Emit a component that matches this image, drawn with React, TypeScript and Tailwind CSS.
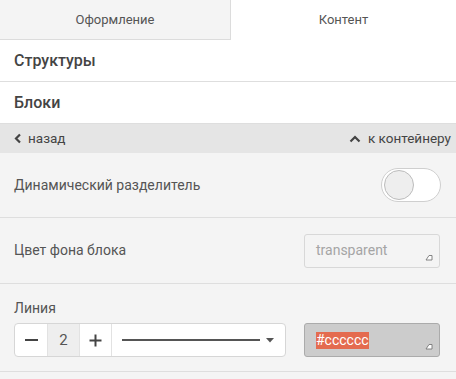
import React from "react";

const font = { fontFamily: "Roboto, 'Noto Sans', sans-serif" };

export default function App() {
  return (
    <div className="w-[456px] h-[379px] overflow-hidden bg-[#f4f4f4] text-[#555]" style={font}>
      {/* Tabs */}
      <div className="flex h-[40px] bg-white">
        <div className="w-[231px] bg-[#f4f4f4] border-r border-b border-[#dcdcdc] flex items-center justify-center text-[13px] text-[#555]">
          Оформление
        </div>
        <div className="flex-1 flex items-center justify-center text-[13px] text-[#555]">Контент</div>
      </div>
      <div className="h-[42px] bg-white border-b border-[#dedede] flex items-center px-[14px] text-[16px] font-medium text-[#444]">
        Структуры
      </div>
      <div className="h-[42px] bg-white border-b border-[#dedede] flex items-center px-[14px] text-[16px] font-medium text-[#444]">
        Блоки
      </div>
      {/* nav bar */}
      <div className="h-[29px] bg-[#e5e5e5] flex items-center justify-between pl-[14px] pr-[5px] text-[13.5px] text-[#444]">
        <div className="flex items-center gap-[6px]">
          <svg width="8" height="11" viewBox="0 0 8 11">
            <path d="M6 1.5 L2 5.5 L6 9.5" fill="none" stroke="#444" strokeWidth="2.2" />
          </svg>
          <span>назад</span>
        </div>
        <div className="flex items-center gap-[7px]">
          <svg width="12" height="8" viewBox="0 0 12 8">
            <path d="M1.5 6.5 L6 2 L10.5 6.5" fill="none" stroke="#444" strokeWidth="2.2" />
          </svg>
          <span>к контейнеру</span>
        </div>
      </div>
      {/* Dynamic separator */}
      <div className="h-[65px] border-b border-[#dedede] flex items-center justify-between pl-[14px] pr-[15px]">
        <span className="text-[14px] text-[#555]">Динамический разделитель</span>
        <div className="w-[60px] h-[34px] rounded-full border border-[#cfcfcf] bg-white flex items-center px-[2px]">
          <div className="w-[30px] h-[30px] rounded-full border border-[#bcbcbc] bg-[#eeeeee]" />
        </div>
      </div>
      {/* Background color */}
      <div className="h-[66px] border-b border-[#dedede] flex items-center justify-between pl-[14px] pr-[16px]">
        <span className="text-[14px] text-[#555]">Цвет фона блока</span>
        <div className="relative w-[136px] h-[34px] rounded-[3px] border border-[#d8d8d8] flex items-center pl-[11px] text-[14px] text-[#a5a5a5]">
          transparent
          <svg className="absolute right-[6px] bottom-[6px]" width="8" height="7" viewBox="0 0 8 7">
            <path d="M1 6 L4 1.5 L7 1.5 L7 6 Z" fill="white" stroke="#777" strokeWidth="0.9" />
          </svg>
        </div>
      </div>
      {/* Line */}
      <div className="h-[88px] border-b border-[#dedede] pl-[14px] pr-[16px] pt-[15px]">
        <div className="text-[14px] text-[#555] leading-[18px]">Линия</div>
        <div className="flex items-center justify-between mt-[6px]">
          <div className="flex h-[34px] w-[272px] bg-white border border-[#d6d6d6] rounded-[4px] overflow-hidden">
            <div className="w-[33px] flex items-center justify-center border-r border-[#e2e2e2]">
              <div className="w-[13px] h-[2px] bg-[#444]" />
            </div>
            <div className="w-[32px] flex items-center justify-center bg-[#eeeeee] border-r border-[#e2e2e2] text-[15px] text-[#555]">
              2
            </div>
            <div className="w-[32px] flex items-center justify-center border-r border-[#e2e2e2]">
              <svg width="13" height="13" viewBox="0 0 13 13">
                <path d="M6.5 0.5 V12.5 M0.5 6.5 H12.5" stroke="#444" strokeWidth="2" />
              </svg>
            </div>
            <div className="flex-1 flex items-center pl-[10px] pr-[11px] gap-[6px]">
              <div className="flex-1 h-[2px] bg-[#555]" />
              <svg width="8" height="5" viewBox="0 0 8 5">
                <path d="M0 0 H8 L4 4.5 Z" fill="#555" />
              </svg>
            </div>
          </div>
          <div className="relative w-[136px] h-[34px] rounded-[3px] border border-[#ababab] bg-[#cccccc] flex items-center pl-[11px] text-[14px]">
            <span className="bg-[#e46b4f] text-white leading-[17px]">#cccccc</span>
            <svg className="absolute right-[6px] bottom-[6px]" width="8" height="7" viewBox="0 0 8 7">
              <path d="M1 6 L4 1.5 L7 1.5 L7 6 Z" fill="white" stroke="#777" strokeWidth="0.9" />
            </svg>
          </div>
        </div>
      </div>
    </div>
  );
}
